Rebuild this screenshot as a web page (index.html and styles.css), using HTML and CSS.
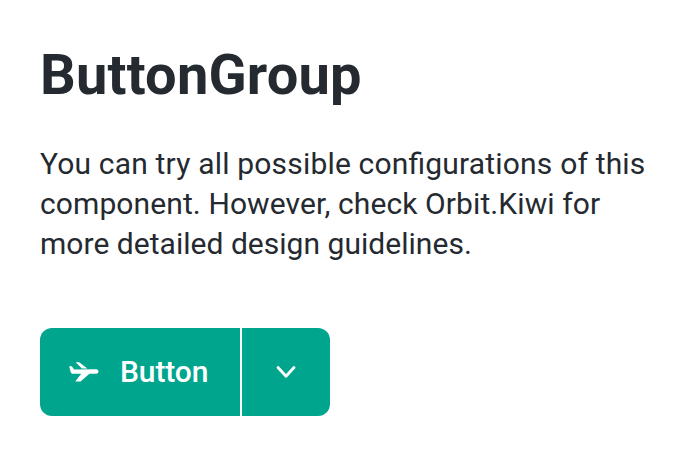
FILE: index.html
```html
<!DOCTYPE html>
<html lang="en">
<head>
<meta charset="utf-8">
<title>ButtonGroup</title>
<link rel="stylesheet" href="styles.css">
</head>
<body>
<main class="page">
  <h1 class="title">ButtonGroup</h1>
  <p class="description"><span class="line-wide">You can try all possible configurations of this</span> <span class="line-medium">component. However, check Orbit.Kiwi for</span> <span class="line-tight">more detailed design guidelines.</span></p>
  <div class="button-group">
    <button class="button button-main" type="button">
      <svg class="icon-plane" viewBox="0 0 32 24" aria-hidden="true"><path d="M1.2 6.2H3.8L6.2 9.6L28 9.3C31.4 9.5 31.4 13.6 28 13.8H21.5L12.5 21.6H7.2L13.2 13.8H5.2C3.6 13.8 2.9 13 2.5 11.5Z"/><path d="M7.6 2.3H11.2L19.4 8.4L13.9 8.6Z"/></svg>
      <span class="label">Button</span>
    </button>
    <button class="button button-toggle" type="button" aria-label="More options">
      <svg class="icon-chevron" viewBox="0 0 24 16" aria-hidden="true"><path d="M4 3.5L12 12.3L20 3.5"/></svg>
    </button>
  </div>
</main>
</body>
</html>
```
FILE: styles.css
```css
body {
  margin: 0;
  background: #fff;
  color: #252a31;
  font-family: Roboto, sans-serif;
}

.page {
  padding: 41px 40px 40px;
}

.title {
  margin: 0;
  font-size: 56px;
  line-height: 68px;
  font-weight: 700;
  letter-spacing: 0.2px;
}

.description {
  margin: 35px 0 64px;
  width: 620px;
  font-size: 30px;
  line-height: 40px;
  font-feature-settings: "liga" 1;
}

.line-wide {
  letter-spacing: 0.18px;
}

.line-medium {
  letter-spacing: 0.1px;
}

.line-tight {
  letter-spacing: 0.03px;
}

.button-group {
  display: flex;
  gap: 2px;
}

.button {
  display: flex;
  align-items: center;
  box-sizing: border-box;
  height: 88px;
  border: 0;
  background: #00a58e;
  color: #fff;
  font: 500 30px/40px Roboto, sans-serif;
}

.button-main {
  width: 200px;
  padding: 0 0 0 28px;
  gap: 20px;
  border-radius: 12px 0 0 12px;
}

.button-toggle {
  justify-content: center;
  width: 88px;
  padding: 0;
  border-radius: 0 12px 12px 0;
}

.label {
  letter-spacing: -0.1px;
}

.icon-plane {
  width: 32px;
  height: 24px;
  fill: currentColor;
}

.icon-chevron {
  width: 24px;
  height: 16px;
  fill: none;
  stroke: currentColor;
  stroke-width: 2.8;
  stroke-linecap: round;
  stroke-linejoin: round;
}
```
